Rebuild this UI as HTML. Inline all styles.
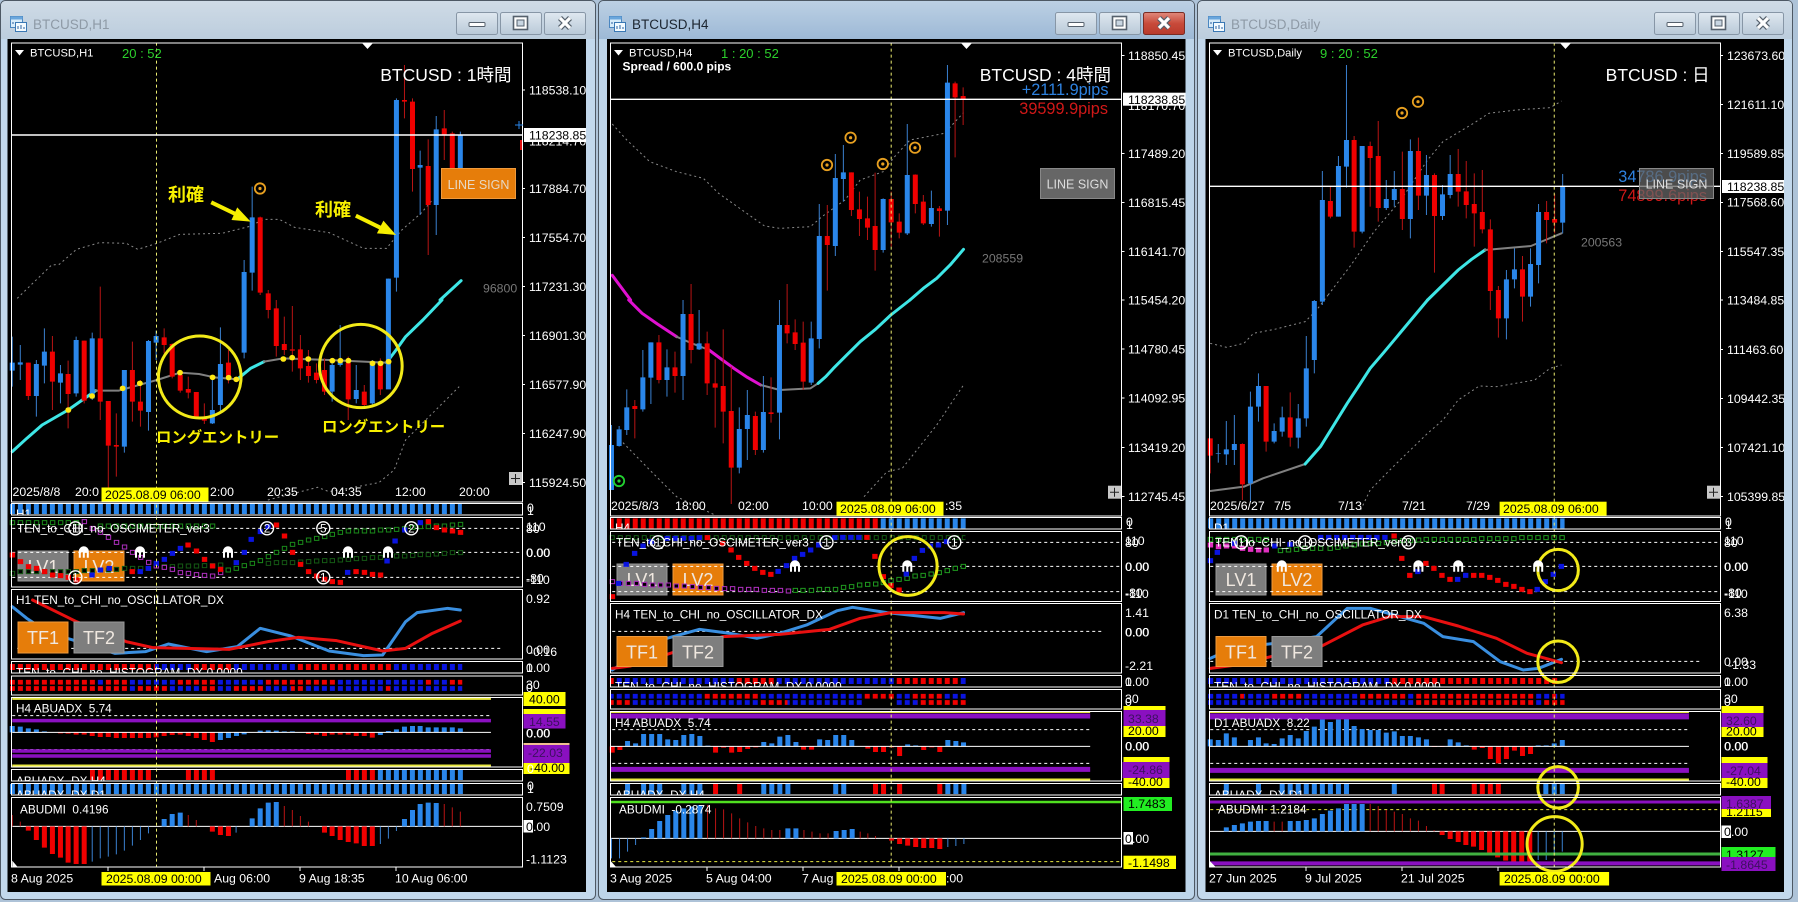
<!DOCTYPE html>
<html><head><meta charset="utf-8"><title>BTCUSD</title>
<style>
html,body{margin:0;padding:0;background:#aec3d8;width:1798px;height:902px;overflow:hidden}
svg{display:block}
text{font-family:"Liberation Sans","Noto Sans CJK JP",sans-serif;font-size:12.3px;fill:#fff}
.z *{vector-effect:non-scaling-stroke;fill:none}
.z .rw{stroke:#b81414;stroke-width:1}
.z .rb{stroke:#f00000;stroke-width:5}
.z .bw{stroke:#3a80d0;stroke-width:1}
.z .bb{stroke:#2a86ea;stroke-width:5}
.z .gap{stroke:#000;stroke-dasharray:3 5}
.z .dw{stroke:#fff;stroke-width:1;stroke-dasharray:3 3}
.z .sw{stroke:#fff;stroke-width:1}
.z .dy{stroke:#eded70;stroke-width:1;stroke-dasharray:3 3}
.z .band{stroke:#8a8a8a;stroke-width:1;stroke-dasharray:2 3}
.z .ma{stroke-width:3;stroke-linejoin:round;stroke-linecap:round}
.z .gm{stroke:#808080;stroke-width:2;stroke-linejoin:round;stroke-linecap:round}
.z .circ{stroke:#f2ea18;stroke-width:3}
.z .pd{stroke-width:5;stroke-linecap:square}
.z .hi{stroke:#000;stroke-width:3;stroke-linecap:square}
.z .row{stroke-dasharray:5 3;stroke-width:5}
.z .rowi{stroke:#000;stroke-dasharray:3 5;stroke-dashoffset:-1;stroke-width:3}
.z .a{stroke:#f6ee00;stroke-width:4}
.z .l{stroke-width:3;stroke-linejoin:round;stroke-linecap:round}
.s{font-size:11.8px}
.big{font-size:17.5px;text-anchor:end}
.y{font-weight:bold;fill:#f8f000}
.k{fill:#000}
.p{fill:#3d1060}
.g{fill:#777}
.btn{font-size:18px;text-anchor:middle;fill:#f0e8e0}
.ls{font-size:12.5px;text-anchor:middle;fill:#e6d8c4}
.pip{font-size:16.3px;text-anchor:end}
</style></head><body>
<svg width="1798" height="902" viewBox="0 0 1798 902" xmlns="http://www.w3.org/2000/svg">
<defs>
<linearGradient id="gi" x1="0" y1="0" x2="0" y2="1"><stop offset="0" stop-color="#cfdbe6"/><stop offset="1" stop-color="#bccddd"/></linearGradient>
<linearGradient id="ga" x1="0" y1="0" x2="0" y2="1"><stop offset="0" stop-color="#bcd0e4"/><stop offset="1" stop-color="#9db9d6"/></linearGradient>
<linearGradient id="gb" x1="0" y1="0" x2="0" y2="1"><stop offset="0" stop-color="#dfe8f0"/><stop offset="1" stop-color="#b9c9d8"/></linearGradient>
<linearGradient id="gr" x1="0" y1="0" x2="0" y2="1"><stop offset="0" stop-color="#e0897c"/><stop offset=".5" stop-color="#c84a3a"/><stop offset="1" stop-color="#b83a2c"/></linearGradient>
<g id="ico"><rect x="10.5" y="16.5" width="12" height="11" fill="#d8ecfa" stroke="#4a86c0"/><rect x="10.5" y="16.5" width="12" height="3" fill="#6aa6dc"/><rect x="15.5" y="22.5" width="11" height="9" fill="#f4fbff" stroke="#3a78b4"/><path d="M18 29v-3M21 29v-4M24 29v-2M13 24v-2" stroke="#2a60a0" fill="none"/></g>
<g id="xg"><path d="M-5 -5L5 5M5 -5L-5 5" stroke="#55606c" stroke-width="5.5" fill="none"/><path d="M-5 -5L5 5M5 -5L-5 5" stroke="#fff" stroke-width="3.2" fill="none"/></g>
<g id="ctl">
<rect x="456.5" y="12.5" width="41" height="22" rx="2" fill="url(#gb)" stroke="#8796a6"/>
<rect x="500.5" y="12.5" width="41" height="22" rx="2" fill="url(#gb)" stroke="#8796a6"/>
<rect x="544.5" y="12.5" width="41" height="22" rx="2" fill="url(#gb)" stroke="#8796a6"/>
<rect x="469" y="22.5" width="16" height="4" rx="1" fill="#fff" stroke="#55606c"/>
<rect x="513.5" y="16.5" width="14" height="13" fill="#fff" stroke="#55606c" stroke-width="1.6"/>
<rect x="517" y="20" width="7" height="6" fill="#c9d6e2" stroke="#55606c"/>
<use href="#xg" x="565" y="23"/>
</g>
<g id="u"><path d="M-5 5.5V-1A5 5 0 0 1 5 -1V5.5H3V0H1V5.5H-1V0H-3V5.5Z" fill="#fff"/></g>
<g id="o"><circle r="5.2" fill="none" stroke="#e8a020" stroke-width="1.8"/><circle r="1.6" fill="#e8a020"/></g>
<g id="og"><circle r="5.2" fill="none" stroke="#22d030" stroke-width="1.8"/><circle r="1.6" fill="#22d030"/></g>
<g id="n"><circle r="6.5" fill="none" stroke="#fff" stroke-width="1.4"/></g>
</defs>

<!-- WINDOW 1 -->
<g>
<rect x=".5" y=".5" width="595" height="899" rx="5" fill="#c2d8ec" stroke="#4d5864"/>
<path d="M1 6Q1 1 6 1H590Q595 1 595 6V39H1Z" fill="url(#gi)"/>
<use href="#ico"/>
<text x="33" y="29" style="font-size:13.5px;fill:#8e9aa6">BTCUSD,H1</text>
<use href="#ctl"/>
<rect x="7.5" y="39" width="578.5" height="853" fill="#000"/>
<svg x="8" y="39" width="578" height="853" viewBox="8 39 578 853">
<rect x="18" y="551" width="50" height="30" fill="#7e7e7e" stroke="#999"/><text class="btn" x="43" y="573">LV1</text>
<rect x="74" y="551" width="50" height="30" fill="#e67d0a" stroke="#f09a3c"/><text class="btn" x="99" y="573">LV2</text>
<g class="z" transform="scale(.38265 .33333)">
<path class="band" d="M45 895L135 795L155 793L200 748L260 728L330 730L360 748L410 730L470 703L580 700L650 680L690 658L730 658L770 682L860 698L950 745L1010 745L1050 690L1100 640L1130 600"/>
<path class="ma" style="stroke:#3ee6e6" d="M1150 900L1205 842"/>
<path class="bw" d="M1203 395V525M1140 348V705M1098 452V645M1036 295V875M659 560V872M638 780V900M1015 836V900"/>
<path class="bb" d="M1203 405V520M1140 388V615M1098 495V503M1036 300V833M659 652V818M638 816V900M1015 836V900"/>
<path class="rw" d="M1182 395V530M1161 330V480M1119 418V765M1078 295V575M1057 195V355M680 650V885M701 870V900M262 860V900"/>
<path class="rb" d="M1182 400V520M1161 385V405M1119 498V615M1078 305V507M1057 300V305M680 652V878M701 880V900"/>
<path class="a" d="M552 607L630 650M930 647L1010 692"/>
<path style="fill:#f6ee00;stroke:none" d="M655 665L605 660L620 622ZM1035 705L985 700L1002 662Z"/>
<g transform="translate(0,900)">
<path class="band" d="M700 600L830 562L860 575L990 548L1030 510L1060 420L1200 260"/>
<path class="ma" style="stroke:#3ee6e6" d="M32 455L70 415L110 375L178 330L215 300L250 272M620 238L655 205L690 185M1010 188L1035 150L1060 110L1105 60L1155 0"/>
<path class="gm" d="M250 272L310 272L410 240L470 218L520 222L560 232L620 238M690 185L740 175L860 180L1010 188"/>
<path class="bw" d="M1015 0V170M973 180V315M931 195V310M889 75V200M868 175V305M638 0V175M576 82V335M555 225V372M408 92V180M388 120V392M325 210V458M241 98V300M199 110V290M158 195V310M116 85V250M95 180V350M53 135V240M32 110V260"/>
<path class="rw" d="M994 175V285M952 255V325M910 170V360M848 175V285M827 190V250M806 150V248M785 105V240M764 18V215M743 50V165M722 0V170M701 0V55M597 150V250M534 310V372M513 276V350M492 230V295M471 210V278M450 130V235M429 85V160M367 240V380M346 125V365M304 340V530M283 303V570M262 0V360M220 122V310M178 182V385M137 108V330M74 188V300"/>
<path class="bb" d="M1015 0V268M973 192V310M931 270V297M889 178V195M868 195V275M638 0V158M576 192V315M555 330V370M408 108V128M388 123V336M325 210V440M241 115V295M199 120V280M158 220V248M116 155V197M95 192V288M53 187V194M32 188V212"/>
<path class="rb" d="M994 192V268M952 275V315M910 188V298M848 210V275M827 218V240M806 198V228M785 148V205M764 148V152M743 132V150M722 25V138M701 0V30M597 188V230M534 350V362M513 276V350M492 267V278M471 225V272M450 132V230M429 112V135M367 305V332M346 210V305M304 435V440M283 303V437M262 115V305M220 122V302M178 222V282M137 155V245M74 188V288"/>
<path style="stroke:#ffe814;stroke-width:5.5;stroke-linecap:round" d="M178 330h1M240 288h1M320 265h1M365 250h1M470 218h1M555 232h1M597 233h1M617 238h1M740 177h1M763 173h1M805 177h1M868 182h1M889 182h1M910 182h1M973 190h1M994 190h1M1015 185h1"/>
<ellipse class="circ" cx="522" cy="231" rx="108" ry="123"/>
<ellipse class="circ" cx="943" cy="198" rx="108" ry="125"/>
<!-- pane 2 -->
<path class="bb" style="stroke-width:10" d="M26 627H1207"/>
<path class="gap" style="stroke-width:12" d="M18 627H1300"/>
<!-- pane 3 -->
<path class="dw" d="M32 685H1365M32 757H1365M32 832H1365"/>
<path class="pd" style="stroke:#1a8a1a" d="M32 668h1M53 668h1M74 668h1M95 668h1M116 668h1M137 668h1M158 668h1M178 668h1M199 668h1M262 678h1M283 678h1M304 678h1M325 678h1M346 678h1M367 678h1M388 678h1M408 678h1M429 678h1M450 678h1M471 678h1M492 678h1M513 678h1M534 678h1M555 678h1M596 810h1M617 805h1M638 797h1M659 790h1M680 782h1M701 770h1M722 757h1M743 745h1M764 733h1M785 727h1M806 720h1M827 715h1M848 710h1M868 703h1M889 697h1M910 693h1M931 693h1M952 693h1M973 693h1M994 690h1M1015 690h1M1036 688h1M1057 686h1M1078 682h1M1098 680h1M1119 680h1M1140 678h1M1161 678h1M1182 675h1M1203 673h1"/>
<path class="hi" d="M32 668h1M53 668h1M74 668h1M95 668h1M116 668h1M137 668h1M158 668h1M178 668h1M199 668h1M262 678h1M283 678h1M304 678h1M325 678h1M346 678h1M367 678h1M388 678h1M408 678h1M429 678h1M450 678h1M471 678h1M492 678h1M513 678h1M534 678h1M555 678h1M596 810h1M617 805h1M638 797h1M659 790h1M680 782h1M701 770h1M722 757h1M743 745h1M764 733h1M785 727h1M806 720h1M827 715h1M848 710h1M868 703h1M889 697h1M910 693h1M931 693h1M952 693h1M973 693h1M994 690h1M1015 690h1M1036 688h1M1057 686h1M1078 682h1M1098 680h1M1119 680h1M1140 678h1M1161 678h1M1182 675h1M1203 673h1"/>
<path class="pd" style="stroke:#145a14" d="M32 820h1M53 815h1M74 815h1M95 815h1M116 815h1M137 815h1M158 815h1M178 815h1M199 815h1M220 812h1M241 812h1M262 810h1M283 810h1M304 808h1M325 805h1M346 805h1M367 805h1M388 805h1M429 800h1M450 800h1M471 798h1M492 798h1M513 798h1M534 797h1M555 797h1M576 795h1M701 790h1M722 788h1M743 788h1M764 788h1M785 786h1M806 785h1M827 783h1M848 782h1M868 782h1M889 780h1M910 778h1M931 776h1M952 775h1M973 773h1M994 772h1M1036 768h1M1057 768h1M1078 766h1M1098 764h1M1119 764h1M1140 762h1M1161 760h1M1182 758h1M1203 758h1"/>
<path class="hi" d="M32 820h1M53 815h1M74 815h1M95 815h1M116 815h1M137 815h1M158 815h1M178 815h1M199 815h1M220 812h1M241 812h1M262 810h1M283 810h1M304 808h1M325 805h1M346 805h1M367 805h1M388 805h1M429 800h1M450 800h1M471 798h1M492 798h1M513 798h1M534 797h1M555 797h1M576 795h1M701 790h1M722 788h1M743 788h1M764 788h1M785 786h1M806 785h1M827 783h1M848 782h1M868 782h1M889 780h1M910 778h1M931 776h1M952 775h1M973 773h1M994 772h1M1036 768h1M1057 768h1M1078 766h1M1098 764h1M1119 764h1M1140 762h1M1161 760h1M1182 758h1M1203 758h1"/>
<path class="pd" style="stroke:#b030c0" d="M220 665h1M241 685h1M262 697h1M283 712h1M304 727h1M325 741h1M346 757h1M367 772h1M388 787h1M408 798h1M429 802h1M450 808h1M471 818h1M492 820h1M513 824h1M534 826h1M555 828h1M576 818h1"/>
<path class="hi" d="M220 665h1M241 685h1M262 697h1M283 712h1M304 727h1M325 741h1M346 757h1M367 772h1M388 787h1M408 798h1M429 802h1M450 808h1M471 818h1M492 820h1M513 824h1M534 826h1M555 828h1M576 818h1"/>
<path class="pd" style="stroke:#f00000" d="M32 765h1M53 785h1M74 800h1M95 805h1M116 815h1M137 825h1M158 827h1M178 832h1M200 840h1M345 815h1M491 735h1M513 753h1M534 778h1M555 798h1M576 808h1M722 675h1M743 708h1M764 757h1M785 793h1M806 815h1M827 828h1M848 838h1M868 845h1M889 847h1M930 815h1M952 817h1M973 823h1M994 825h1M1119 665h1M1140 683h1M1161 690h1M1182 693h1M1203 697h1"/>
<path class="pd" style="stroke:#0a14e0" d="M240 825h1M262 810h1M285 805h1M366 815h1M387 805h1M408 790h1M429 778h1M450 760h1M471 745h1M617 788h1M638 757h1M656 718h1M680 695h1M700 680h1M908 817h1M1011 783h1M1032 723h1M1057 690h1M1098 668h1"/>
</g>
<g transform="translate(0,1800)">
<!-- pane 4 -->
<path class="dw" d="M45 145H1315"/>
<path class="l" style="stroke:#3a8fe0" d="M32 20L70 55L130 100L190 120L300 160L380 155L440 132L540 155L620 140L680 85L760 108L860 153L950 167L1000 165L1060 65L1090 38L1170 25L1203 30"/>
<path class="l" style="stroke:#e81010" d="M85 0L200 65L330 125L400 143L600 148L700 125L780 112L880 122L1000 153L1060 145L1130 100L1203 63"/>
<!-- pane 5 -->
<path style="stroke:#f00000;stroke-width:6" d="M26 201H405M505 201H608M775 201H1023"/>
<path style="stroke:#0a14e0;stroke-width:6" d="M405 201H505M608 201H775M1023 201H1208"/>
<path class="gap" style="stroke-width:8" d="M18 201H1300"/>
<!-- pane 6 -->
<path style="stroke:#f00000;stroke-width:5" d="M26 247H250M270 247H335M460 247H565M690 247H880M1110 247H1128M1170 247H1208M26 265H335M355 265H440M525 265H565M605 265H690M760 265H800M1000 265H1020"/>
<path style="stroke:#0a14e0;stroke-width:5" d="M250 247H270M335 247H460M565 247H690M880 247H1110M1128 247H1170M335 265H355M440 265H525M565 265H605M690 265H760M800 265H1000M1020 265H1208"/>
<path class="gap" style="stroke-width:22" d="M18 256H1300"/>
<path style="stroke:#000;stroke-width:1.5" d="M26 256H1208"/>
<!-- pane 7 -->
<path style="stroke:#e8e840;stroke-width:3" d="M32 295H1283M32 498H1283"/>
<path class="dw" d="M32 347H1283M32 449H1283"/>
<path style="stroke:#8a10c0;stroke-width:3.5" d="M32 362H1283M32 453H1283M32 468H1283"/>
<path class="bb" d="M32 397V378M53 397V380M74 397V385M95 397V388M116 397V394M576 397V420M597 397V414M618 397V408M638 397V403M680 397V392M701 397V391M722 397V392M743 397V394M764 397V394M994 397V405M1015 397V393M1036 397V388M1057 397V380M1078 397V378M1098 397V378M1119 397V382M1140 397V382M1161 397V382M1182 397V382M1203 397V385"/>
<path class="rb" d="M158 397V400M178 397V401M199 397V404M220 397V404M241 397V408M262 397V411M283 397V411M304 397V414M325 397V414M346 397V414M367 397V414M388 397V414M408 397V412M429 397V408M450 397V405M471 397V404M492 397V408M513 397V414M534 397V420M555 397V426M806 397V402M827 397V404M848 397V408M868 397V404M889 397V404M910 397V404M931 397V408M952 397V408M973 397V413"/>
<path class="sw" d="M32 397H1283"/>
<!-- pane 8 9 -->
<path style="stroke:#f00000;stroke-width:10" d="M235 525H396M485 525H562M904 525H985"/>
<path style="stroke:#2a86ea;stroke-width:10" d="M985 525H1210M26 567H1210"/>
<path class="gap" style="stroke-width:12" d="M18 525H1300M18 567H1300"/>
<!-- pane 10 -->
<path class="sw" d="M32 679H1365"/>
<path class="rw" d="M32 679V645M53 679V665M492 679V645M513 679V660M743 679V618M764 679V630M785 679V648M806 679V665M1161 679V612M1182 679V622M1203 679V635"/>
<path class="bw" d="M241 679V785M262 679V775M283 679V770M304 679V763M325 679V752M346 679V737M367 679V720M388 679V700M617 679V698M994 679V732M1015 679V716M1036 679V693"/>
<path class="rb" d="M74 679V692M95 679V720M116 679V743M137 679V762M158 679V773M178 679V788M199 679V792M220 679V792M555 679V695M576 679V705M597 679V708M848 679V698M868 679V708M889 679V720M910 679V726M931 679V730M952 679V738M973 679V738"/>
<path class="bb" d="M429 679V657M450 679V642M471 679V638M659 679V655M680 679V625M701 679V608M722 679V606M1057 679V657M1078 679V630M1098 679V612M1119 679V608M1140 679V609"/>
<path style="fill:#fff;stroke:none" d="M32 782L47 802H32Z"/>
</g>
<path class="dy" d="M409 128V2602"/>
<path class="sw" d="M30 405H1365" style="stroke-width:1.4"/>
</g>
<rect x="18" y="622" width="50" height="31" fill="#e67d0a" stroke="#f09a3c"/><text class="btn" x="43" y="644">TF1</text>
<rect x="74" y="622" width="50" height="31" fill="#7e7e7e" stroke="#999"/><text class="btn" x="99" y="644">TF2</text>
<g fill="none" stroke="#fff"><rect x="11.5" y="43" width="511" height="459"/><rect x="11.5" y="503.5" width="511" height="11.5"/><rect x="11.5" y="517.5" width="511" height="69.5"/><rect x="11.5" y="589.5" width="511" height="69.5"/><rect x="11.5" y="661.5" width="511" height="11.5"/><rect x="11.5" y="676" width="511" height="19"/><rect x="11.5" y="697.5" width="511" height="69.5"/><rect x="11.5" y="769.5" width="511" height="11.5"/><rect x="11.5" y="783.5" width="511" height="11.5"/><rect x="11.5" y="797.5" width="511" height="69.5"/></g>
<path d="M522 90h3M522 188.5h3M522 237.5h3M522 286.5h3M522 335.5h3M522 384.5h3M522 433.5h3M522 482.5h3M108 867v4M204 867v4M300 867v4M396 867v4" stroke="#fff"/>
<path d="M15 50h9l-4.500 5.500zM362 43h11l-5.500 6z" fill="#fff"/>
<text x="30" y="56.500" style="font-size:11.200px">BTCUSD,H1</text>
<text x="122" y="58" style="font-size:13px;fill:#2cd02c">20 : 52</text>
<text class="big" x="511.500" y="81">BTCUSD : 1時間</text>
<rect x="441.500" y="168.500" width="74" height="30" fill="#e67d0a" stroke="#f09a3c"/><text class="ls" x="478.500" y="189">LINE SIGN</text>
<use href="#o" x="260" y="188.500"/>
<text class="y" x="168" y="201" style="font-size:18px">利確</text>
<text class="y" x="315" y="216" style="font-size:18px">利確</text>
<text class="y" x="156" y="442.500" style="font-size:15.400px">ロングエントリー</text>
<text class="y" x="322" y="432" style="font-size:15.400px">ロングエントリー</text>
<text class="g" x="483" y="292.500">96800</text>
<text x="529" y="94.500">118538.10</text><text x="529" y="193">117884.70</text><text x="529" y="242">117554.70</text><text x="529" y="291">117231.30</text><text x="529" y="340">116901.30</text><text x="529" y="389">116577.90</text><text x="529" y="438">116247.90</text><text x="529" y="487">115924.50</text>
<text x="529" y="145.500">118214.70</text>
<rect x="524" y="128" width="62" height="14" fill="#fff"/><text class="k" x="529" y="139.500">118238.85</text>
<path d="M515 125h8M519 121v8" stroke="#2a86ea" fill="none"/><path d="M521 140v10" stroke="#e01010" stroke-width="2"/>
<rect x="509" y="472" width="13" height="13" fill="#c8c8c8"/><path d="M511 478.500h9M515.500 474v9" stroke="#222" fill="none"/>
<text x="12.500" y="496">2025/8/8</text><text x="75" y="496">20:0</text><text x="210" y="496">2:00</text><text x="267" y="496">20:35</text><text x="331" y="496">04:35</text><text x="395" y="496">12:00</text><text x="459" y="496">20:00</text>
<rect x="101.500" y="487.500" width="107" height="14" fill="#ffff00"/><text class="k" x="105" y="499">2025.08.09 06:00</text>
<svg x="16" y="504" width="100" height="11"><text x="0" y="14" class="s">H1</text></svg>
<text class="s" x="17" y="532.500">TEN_to_CHI_no_OSCIMETER_ver3</text>
<g transform="translate(75.400,528.300)"><use href="#n"/><text y="4" class="s" style="text-anchor:middle">1</text></g>
<g transform="translate(75.400,577.300)"><use href="#n"/><text y="4" class="s" style="text-anchor:middle">1</text></g>
<g transform="translate(267,528.300)"><use href="#n"/><text y="4" class="s" style="text-anchor:middle">2</text></g>
<g transform="translate(323.300,528.300)"><use href="#n"/><text y="4" class="s" style="text-anchor:middle">5</text></g>
<g transform="translate(323.300,577.300)"><use href="#n"/><text y="4" class="s" style="text-anchor:middle">1</text></g>
<g transform="translate(411.300,528.300)"><use href="#n"/><text y="4" class="s" style="text-anchor:middle">2</text></g>
<use href="#u" x="83.800" y="552.300"/><use href="#u" x="140" y="552.300"/><use href="#u" x="228" y="552.300"/><use href="#u" x="348" y="552.300"/><use href="#u" x="388" y="552.300"/>
<text class="s" x="16" y="604">H1 TEN_to_CHI_no_OSCILLATOR_DX</text>
<svg x="16" y="662" width="450" height="11"><text class="s" x="0" y="14.500">TEN_to_CHI_no_HISTOGRAM_DX 0.0000</text></svg>
<text class="s" x="16" y="712.500">H4 ABUADX&#160;&#160;5.74</text>
<svg x="16" y="770" width="200" height="11"><text class="s" x="0" y="15">ABUADX_DX H4</text></svg>
<svg x="16" y="784" width="200" height="11"><text class="s" x="0" y="15">ABUADX_DX D1</text></svg>
<text class="s" x="20" y="813.500">ABUDMI&#160;&#160;0.4196</text>
<text x="527" y="512">0</text><text x="527" y="515">1</text>
<text x="526" y="531">110</text><text x="526" y="533">80</text><text x="526" y="557">0.00</text><text x="526.400" y="557">0.00</text><text x="526" y="582.500">-80</text><text x="526" y="584">-110</text>
<text x="526" y="603">0.92</text><text x="526" y="654">0.00</text><text x="529" y="656">-0.16</text>
<text x="526" y="672">0.00</text><text x="526" y="672">1</text>
<text x="526" y="689">30</text><text x="526" y="692">0</text>
<rect x="523.500" y="692" width="42" height="14" fill="#ffff00"/><text class="k" x="529" y="703.500">40.00</text>
<rect x="523.500" y="709" width="42" height="5" fill="#ffff00"/><rect x="523.500" y="714" width="42" height="14.500" fill="#8a10c0"/><text class="p" x="529" y="726">14.55</text>
<text x="526" y="737.500">0.00</text><text x="526.400" y="737.500">0.00</text>
<rect x="523.500" y="743" width="46" height="2" fill="#f0c090"/><rect x="523.500" y="745" width="46" height="18" fill="#8a10c0"/><text class="p" x="528" y="757">-22.03</text>
<rect x="523.500" y="763" width="46" height="11" fill="#ffff00"/><text class="k" x="530" y="772">-40.00</text>
<text x="527" y="773">0</text><text x="527" y="790">0</text><text x="527" y="793">1</text>
<text x="526" y="811">0.7509</text>
<rect x="523.500" y="820" width="9.500" height="12.500" fill="#fff"/><text class="k" x="526" y="831">0</text><text x="533" y="831">.00</text>
<text x="526" y="863.500">-1.1123</text>
<text x="11" y="882.500">8 Aug 2025</text><text x="214" y="882.500">Aug 06:00</text><text x="299" y="882.500">9 Aug 18:35</text><text x="395" y="882.500">10 Aug 06:00</text>
<rect x="101.500" y="872" width="109" height="13.500" fill="#ffff00"/><text class="k" x="106" y="883">2025.08.09 00:00</text>
</svg>
</g>

<!-- WINDOW 2 -->
<g transform="translate(600,0)">
<rect x="-1.500" y=".5" width="596" height="899" rx="5" fill="#bdd5ea" stroke="#4d5864"/>
<path d="M-1 6Q-1 1 4 1H590Q594 1 594 6V39H-1Z" fill="url(#ga)"/>
<g transform="translate(-1,0)"><use href="#ico"/></g>
<text x="32" y="29" style="font-size:13.5px;fill:#1c2530">BTCUSD,H4</text>
<g transform="translate(-1,0)"><use href="#ctl"/><rect x="544.500" y="12.500" width="41" height="22" rx="2" fill="url(#gr)" stroke="#7a2c24"/><use href="#xg" x="565" y="23"/></g>
<rect x="7" y="39" width="578.500" height="853" fill="#000"/>
<svg x="7" y="39" width="578.500" height="853" viewBox="7 39 578.500 853">
<rect x="17" y="564" width="50" height="31" fill="#7e7e7e" stroke="#999"/><text class="btn" x="42" y="586">LV1</text>
<rect x="73" y="564" width="50" height="31" fill="#e67d0a" stroke="#f09a3c"/><text class="btn" x="98" y="586">LV2</text>
<g class="z" transform="scale(.38265 .33333)">
<path class="band" d="M32 372L70 420L130 485L200 515L270 535L310 580L430 678L470 685L550 680L580 650L640 600L680 540L740 515L770 470L810 420L900 400L950 338"/>
<path class="ma" style="stroke:#e010d0" d="M32 826L80 900"/>
<path class="ma" style="stroke:#3ee6e6" d="M810 900L845 865L880 835L915 795L950 748"/>
<path class="bw" d="M908 195V675M866 572V680M803 372V705M740 595V758M636 435V605M615 462V768M573 612V900"/>
<path class="bb" d="M908 248V632M866 624V672M803 525V700M740 597V750M636 517V537M615 534V738M573 708V900"/>
<path class="rw" d="M949 262V375M928 245V472M887 618V710M845 585V675M824 523V640M782 640V715M761 575V740M719 518V812M699 590V720M678 575V708M657 517V648M594 615V872M489 852V900M238 852V900"/>
<path class="rb" d="M949 288V298M928 250V292M887 625V633M845 605V670M824 524V612M782 665V698M761 597V667M719 678V750M699 655V683M678 628V657M657 517V630M594 708V735"/>
<g transform="translate(0,900)">
<path class="band" d="M60 428L130 510L200 590L300 645M690 590L750 515L790 505L880 375L950 255"/>
<path class="ma" style="stroke:#e010d0" d="M75 0L110 40L150 72L200 110M285 150L320 180L350 205L385 232L420 255"/>
<path class="gm" d="M200 110L240 130L285 150M420 255L470 270L550 265L570 250"/>
<path class="ma" style="stroke:#3ee6e6" d="M570 250L590 230L610 205L645 165L680 125L720 88L760 45L810 0"/>
<path class="bw" d="M573 0V145M552 65V255M469 0V418M427 228V458M385 270V480M364 322V520M259 30V150M217 0V300M175 148V290M133 127V312M112 150V335M70 268V405M50 378V440M30 375V570"/>
<path class="rw" d="M531 65V270M510 58V150M489 0V130M447 232V368M406 335V465M343 200V612M322 88V430M301 178V383M280 95V285M238 0V190M196 155V278M154 105V250M91 300V415"/>
<path class="bb" d="M573 0V117M552 115V248M469 75V338M427 336V450M385 345V387M364 387V503M259 130V148M217 42V228M175 202V240M133 127V233M112 232V328M70 322V390M50 388V438M30 435V570"/>
<path class="rb" d="M531 128V245M510 97V132M489 75V100M447 337V342M406 348V450M343 333V503M322 258V335M301 250V263M280 130V250M238 42V150M196 202V228M154 127V240M91 318V327"/>
<!-- pane 2 -->
<path style="stroke:#f00000;stroke-width:10" d="M26 670H730"/><path style="stroke:#2a86ea;stroke-width:10" d="M730 670H956"/>
<path class="gap" style="stroke-width:12" d="M15 670H1300"/>
<!-- pane 3 -->
<path class="dw" d="M32 727H1363M32 799H1363M32 875H1363"/>
<path class="row" style="stroke:#145a14" d="M25.500 713H955"/><path class="rowi" d="M25.500 713H955"/>
<path class="pd" style="stroke:#b030c0" d="M32 845h1M53 850h1M74 850h1M95 850h1M116 853h1M137 855h1M158 855h1M178 855h1M199 858h1M220 858h1M241 860h1M262 862h1M283 863h1M304 865h1M325 866h1M346 866h1M367 868h1M388 868h1M408 868h1M429 871h1M450 871h1M471 871h1M492 873h1"/>
<path class="hi" d="M32 845h1M53 850h1M74 850h1M95 850h1M116 853h1M137 855h1M158 855h1M178 855h1M199 858h1M220 858h1M241 860h1M262 862h1M283 863h1M304 865h1M325 866h1M346 866h1M367 868h1M388 868h1M408 868h1M429 871h1M450 871h1M471 871h1M492 873h1"/>
<path class="pd" style="stroke:#1f9a1f" d="M510 871h1M530 871h1M552 871h1M573 868h1M594 868h1M615 868h1M636 862h1M657 860h1M678 855h1M699 853h1M720 852h1M740 848h1M760 842h1M781 838h1M802 835h1M823 828h1M844 826h1M865 822h1M886 818h1M907 812h1M928 805h1M949 799h1"/>
<path class="pd" style="stroke:#f00000" d="M280 713h1M320 730h1M342 750h1M362 772h1M383 790h1M404 805h1M425 817h1M446 823h1M697 712h1M718 769h1M740 830h1M760 857h1M781 870h1M32 890h1"/>
<path class="hi" d="M510 871h1M530 871h1M552 871h1M573 868h1M594 868h1M615 868h1M636 862h1M657 860h1M678 855h1M699 853h1M720 852h1M740 848h1M760 842h1M781 838h1M802 835h1M823 828h1M844 826h1M865 822h1M886 818h1M907 812h1M928 805h1M949 799h1"/>
<path class="pd" style="stroke:#0a14e0" d="M48 850h1M68 793h1M90 760h1M112 738h1M133 725h1M175 715h1M196 715h1M217 715h1M238 715h1M259 713h1M465 814h1M487 797h1M508 775h1M529 763h1M550 750h1M571 735h1M613 713h1M634 712h1M655 712h1M676 712h1M800 822h1M821 775h1M842 751h1M863 738h1M884 735h1M905 725h1"/>
<ellipse class="circ" cx="805" cy="798" rx="76" ry="88"/>
</g>
<g transform="translate(0,1800)">
<path class="dw" d="M32 94H1310"/>
<path class="l" style="stroke:#3a8fe0" d="M32 210L100 160L175 115L260 88L340 100L410 115L470 100L540 75L620 32L660 22L750 38L890 55L950 38"/>
<path class="l" style="stroke:#e81010" d="M32 205L80 198L320 110L470 103L600 88L680 55L760 38L900 38L950 42"/>
<path style="stroke:#0a14e0;stroke-width:6" d="M38 243H355M455 243H772M938 243H956"/>
<path style="stroke:#f00000;stroke-width:6" d="M26 243H38M355 243H455M772 243H938"/>
<path class="gap" style="stroke-width:8" d="M15 243H1300"/>
<path style="stroke:#0a14e0;stroke-width:5" d="M26 289H270M415 289H690M770 289H812M895 289H956M80 307H415M490 307H690M770 307H830"/>
<path style="stroke:#f00000;stroke-width:5" d="M270 289H415M690 289H770M812 289H895M26 307H80M415 307H490M830 307H956"/>
<path class="gap" style="stroke-width:22" d="M15 298H1300"/>
<path style="stroke:#000;stroke-width:1.5" d="M26 298H956"/>
<path style="stroke:#e8e840;stroke-width:2" d="M27 336H1281"/>
<path style="stroke:#e8e840;stroke-width:3" d="M27 540H1281"/>
<path style="stroke:#8a10c0;stroke-width:5" d="M27 348H1281M27 508H1281"/>
<path class="dw" d="M32 389H1281M32 490H1281"/>
<path class="bb" d="M72 439V423M93 439V430M114 439V402M135 439V402M156 439V402M177 439V418M198 439V420M219 439V405M240 439V402M261 439V408M282 439V437M428 439V426M449 439V430M470 439V410M491 439V405M512 439V426M574 439V418M595 439V420M616 439V405M637 439V405M658 439V420M804 439V433M825 439V436M909 439V420M930 439V423M950 439V427"/>
<path class="rb" d="M32 439V458M52 439V450M302 439V458M323 439V443M344 439V458M365 439V456M386 439V447M407 439V442M532 439V449M553 439V449M700 439V446M720 439V456M741 439V456M762 439V442M783 439V468M846 439V450M867 439V442M888 439V456"/>
<path class="sw" d="M27 439H1281"/>
<path class="bb" d="M72 552V582M114 552V582M135 552V582M156 552V582M219 552V582M240 552V582M261 552V582M428 552V582M449 552V582M470 552V582M491 552V582M616 552V582M637 552V582M909 552V582M930 552V582M951 552V582"/>
<path class="rb" d="M302 552V582M365 552V582M720 552V582M741 552V582M783 552V582M888 552V582"/>
<path style="stroke:#50e020;stroke-width:2.500" d="M27 606H1363"/>
<path class="dy" style="stroke:#e8e840" d="M32 785H1363"/>
<path class="sw" d="M27 715H1363"/>
<path class="bw" d="M30 715V775M51 715V775M72 715V755M93 715V735M909 715V741M930 715V738M951 715V732"/>
<path class="rw" d="M281 715V615M302 715V625M323 715V628M344 715V640M365 715V655M386 715V667M407 715V678M428 715V685M449 715V690M470 715V690M533 715V690M554 715V695M575 715V700M596 715V700M680 715V695M700 715V700M720 715V708"/>
<path class="bb" d="M114 715V712M135 715V687M156 715V663M177 715V645M198 715V632M219 715V625M240 715V620M261 715V615M491 715V685M512 715V685M617 715V693M638 715V690M659 715V687"/>
<path class="rb" d="M762 715V722M783 715V732M804 715V737M825 715V741M846 715V744M867 715V744M888 715V747"/>
<path style="fill:#fff;stroke:none" d="M27 782L43 802H27Z"/>
</g>
<path class="dy" d="M761 128V2602"/>
<path class="sw" d="M27 298H1363" style="stroke-width:1.400"/>
</g>
<rect x="17" y="636.500" width="50" height="30" fill="#e67d0a" stroke="#f09a3c"/><text class="btn" x="42" y="658.500">TF1</text>
<rect x="73" y="636.500" width="50" height="30" fill="#7e7e7e" stroke="#999"/><text class="btn" x="98" y="658.500">TF2</text>
<g fill="none" stroke="#fff"><rect x="10.500" y="43" width="511" height="473"/><rect x="10.500" y="517.500" width="511" height="11.500"/><rect x="10.500" y="531.500" width="511" height="70"/><rect x="10.500" y="603.500" width="511" height="69.500"/><rect x="10.500" y="675.500" width="511" height="11.500"/><rect x="10.500" y="689.500" width="511" height="19.500"/><rect x="10.500" y="711.500" width="511" height="69.500"/><rect x="10.500" y="783.500" width="511" height="11.500"/><rect x="10.500" y="797.500" width="511" height="69.500"/></g>
<path d="M521.500 55.500h3M521.500 153.500h3M521.500 202.500h3M521.500 251.500h3M521.500 300h3M521.500 349h3M521.500 398h3M521.500 447.500h3M521.500 496.500h3M107 867v4M203 867v4M299 867v4" stroke="#fff"/>
<path d="M14 50h9l-4.500 5.500zM361 43h11l-5.500 6z" fill="#fff"/>
<text x="29" y="56.500" style="font-size:11.200px">BTCUSD,H4</text>
<text x="121" y="58" style="font-size:13px;fill:#2cd02c">1 : 20 : 52</text>
<text x="22.500" y="70.500" style="font-size:12px;font-weight:bold">Spread / 600.0 pips</text>
<text class="big" x="511" y="81">BTCUSD : 4時間</text>
<text class="pip" x="508.500" y="95" style="fill:#2e82e0">+2111.9pips</text>
<text class="pip" x="508" y="114" style="fill:#d01818">39599.9pips</text>
<rect x="440.500" y="168.500" width="74" height="30" fill="#666" stroke="#888"/><text class="ls" x="477.500" y="188.500" style="fill:#ddd">LINE SIGN</text>
<use href="#o" x="227" y="165"/><use href="#o" x="250.600" y="137.700"/><use href="#o" x="282.800" y="164"/><use href="#o" x="315" y="147.700"/>
<use href="#og" x="19" y="481"/>
<text class="g" x="382" y="262.500">208559</text>
<text x="528" y="60">118850.45</text><text x="528" y="158">117489.20</text><text x="528" y="207">116815.45</text><text x="528" y="256">116141.70</text><text x="528" y="304.500">115454.20</text><text x="528" y="353.500">114780.45</text><text x="528" y="402.500">114092.95</text><text x="528" y="452">113419.20</text><text x="528" y="501">112745.45</text>
<text x="528" y="110">118170.70</text>
<rect x="523" y="92.700" width="62.500" height="13" fill="#fff"/><text class="k" x="528" y="104">118238.85</text>
<rect x="508" y="485.700" width="13" height="13" fill="#c8c8c8"/><path d="M510 492.200h9M514.500 487.700v9" stroke="#222" fill="none"/>
<text x="11" y="510">2025/8/3</text><text x="75" y="510">18:00</text><text x="138" y="510">02:00</text><text x="202" y="510">10:00</text><text x="345" y="510">:35</text>
<rect x="236.500" y="501.700" width="107" height="14" fill="#ffff00"/><text class="k" x="240" y="513">2025.08.09 06:00</text>
<svg x="15" y="518" width="100" height="11"><text x="0" y="14" class="s">H4</text></svg>
<text class="s" x="16" y="546.500">TEN_to_CHI_no_OSCIMETER_ver3</text>
<g transform="translate(58,542.300)"><use href="#n"/><text y="4" class="s" style="text-anchor:middle">1</text></g>
<g transform="translate(226.500,542.300)"><use href="#n"/><text y="4" class="s" style="text-anchor:middle">1</text></g>
<g transform="translate(354.300,542.300)"><use href="#n"/><text y="4" class="s" style="text-anchor:middle">1</text></g>
<use href="#u" x="195" y="566.300"/><use href="#u" x="307.300" y="566.300"/>
<text class="s" x="15" y="618.500">H4 TEN_to_CHI_no_OSCILLATOR_DX</text>
<svg x="15" y="676" width="450" height="11"><text class="s" x="0" y="14.500">TEN_to_CHI_no_HISTOGRAM_DX 0.0000</text></svg>
<text class="s" x="15" y="727">H4 ABUADX&#160;&#160;5.74</text>
<svg x="15" y="784" width="200" height="11"><text class="s" x="0" y="15">ABUADX_DX H4</text></svg>
<text class="s" x="19" y="813.500">ABUDMI&#160;&#160;-0.2874</text>
<text x="526" y="526">0</text><text x="526" y="529">1</text>
<text x="525" y="545">110</text><text x="525" y="547">80</text><text x="525" y="571">0.00</text><text x="525.400" y="571">0.00</text><text x="525" y="597">-80</text><text x="525" y="598">-110</text>
<text x="525" y="617">1.41</text><text x="525" y="636.500">0.00</text><text x="525.400" y="636.500">0.00</text><text x="525" y="670">-2.21</text>
<text x="525" y="686">0.00</text><text x="525" y="686">1</text>
<text x="525" y="703">30</text><text x="525" y="706">0</text>
<rect x="523.500" y="706" width="42" height="4" fill="#ffff00"/><rect x="523.500" y="710" width="42" height="16" fill="#8a10c0"/><text class="p" x="528" y="723">33.38</text>
<rect x="523.500" y="726" width="42" height="11" fill="#ffff00"/><text class="k" x="528" y="735">20.00</text>
<text x="525" y="750.500">0.00</text><text x="525.400" y="750.500">0.00</text>
<rect x="523.500" y="757" width="46" height="5" fill="#ffff00"/><rect x="522.500" y="762" width="47" height="16" fill="#8a10c0"/><text class="p" x="528" y="774">-24.86</text>
<rect x="523.500" y="778" width="46" height="10" fill="#ffff00"/><text class="k" x="528" y="786">-40.00</text>
<rect x="523.500" y="797" width="48.500" height="14" fill="#22ee22"/><text class="k" x="528" y="808">1.7483</text>
<rect x="523.500" y="832" width="9.500" height="12.500" fill="#fff"/><text class="k" x="525" y="843">0</text><text x="532" y="843">.00</text>
<rect x="523.500" y="855.700" width="52.500" height="13.300" fill="#ffff00"/><text class="k" x="528" y="867">-1.1498</text>
<text x="10" y="882.500">3 Aug 2025</text><text x="106" y="882.500">5 Aug 04:00</text><text x="202" y="882.500">7 Aug</text><text x="346" y="882.500">:00</text>
<rect x="236.500" y="872" width="109.500" height="13.500" fill="#ffff00"/><text class="k" x="241" y="883">2025.08.09 00:00</text>
</svg>
</g>

<!-- WINDOW 3 -->
<g transform="translate(1198,0)">
<rect x="-.5" y=".5" width="595" height="899" rx="5" fill="#c2d8ec" stroke="#4d5864"/>
<path d="M0 6Q0 1 5 1H590Q594 1 594 6V39H0Z" fill="url(#gi)"/>
<use href="#ico"/>
<text x="33" y="29" style="font-size:13.5px;fill:#8e9aa6">BTCUSD,Daily</text>
<use href="#ctl"/>
<rect x="7.500" y="39" width="578.500" height="853" fill="#000"/>
<svg x="8" y="39" width="578" height="853" viewBox="8 39 578 853">
<rect x="18" y="564" width="50" height="31" fill="#7e7e7e" stroke="#999"/><text class="btn" x="43" y="586">LV1</text>
<rect x="74" y="564" width="50" height="31" fill="#e67d0a" stroke="#f09a3c"/><text class="btn" x="99" y="586">LV2</text>
<g class="z" transform="scale(.38265 .33333)">
<path class="band" d="M340 885L400 795L460 695L530 600L600 480L640 425L720 370L760 340L830 330L920 323L950 303"/>
<path class="ma" style="stroke:#3ee6e6" d="M600 900L640 855L680 810L715 778L750 750"/>
<path class="gm" d="M750 750L870 738L950 700"/>
<path class="bw" d="M953 522V700M890 612V850M869 745V900M827 745V865M806 810V900M659 465V595M639 555V660M597 465V645M555 418V715M513 513V620M492 540V630M429 438V700M388 195V563M367 468V650M325 513V900"/>
<path class="rw" d="M932 582V700M911 603V730M848 768V900M785 858V900M764 658V900M743 510V700M722 520V740M701 483V655M680 447V620M618 520V818M576 413V630M534 455V690M471 363V665M450 425V620M408 408V743M346 560V655"/>
<path class="bb" d="M953 558V668M890 636V795M869 792V890M827 808V838M806 838V900M659 522V585M639 583V648M597 525V587M555 453V657M513 567V600M492 597V624M429 438V695M388 420V500M367 498V650M325 600V900"/>
<path class="rb" d="M932 657V668M911 636V660M848 808V890M785 870V900M764 688V873M743 636V688M722 612V640M701 574V615M680 522V575M618 525V648M576 453V587M534 567V657M471 468V624M450 438V474M408 420V695M346 603V650"/>
<g transform="translate(0,900)">
<path class="band" d="M32 130L75 142L120 130L145 100L200 88L280 65L310 30L340 -15M425 630L450 570L510 500L600 400L640 360L680 300L735 258L780 260L880 240L920 205L950 195"/>
<path class="gm" d="M32 573L120 560L170 535L280 492"/>
<path class="ma" style="stroke:#3ee6e6" d="M280 492L320 440L355 375L390 310L420 258L450 205L485 158L520 110L600 0"/>
<path class="bw" d="M869 0V20M806 0V118M325 0V15M304 0V220M283 108V380M262 312V445M220 320V410M199 370V430M158 220V365M137 275V605M95 345V495M74 363V495M53 432V488"/>
<path class="rw" d="M848 0V65M785 0V113M764 0V30M241 277V440M178 258V455M116 430V600M32 415V520"/>
<path class="bb" d="M806 0V55M325 0V5M304 3V180M283 205V355M262 355V413M220 352V395M199 393V425M158 258V320M137 320V550M95 432V450M74 448V463M53 460V462"/>
<path class="rb" d="M785 0V55M241 352V413M178 258V425M116 432V553M32 415V467"/>
<path style="stroke:#2a86ea;stroke-width:10" d="M26 670H958"/>
<path class="gap" style="stroke-width:12" d="M18.800 670H1300"/>
<path class="dw" d="M32 727H1365M32 799H1365M32 875H1365"/>
<path class="pd" style="stroke:#1f9a1f" d="M215 752h1M236 750h1M257 748h1M278 745h1M299 745h1M320 745h1M345 745h1M365 742h1M386 738h1M408 735h1M429 732h1M450 730h1M471 730h1M492 728h1M513 725h1M534 722h1M555 722h1M576 720h1M596 718h1M617 718h1M638 718h1M659 718h1M680 718h1M700 718h1M720 718h1M741 716h1M762 716h1M783 716h1M804 716h1M825 716h1M846 713h1M867 713h1M888 713h1M909 713h1M930 713h1M951 713h1M32 718h1M53 718h1M74 718h1M95 718h1M116 718h1M137 718h1M158 718h1M178 718h1"/>
<path class="hi" d="M215 752h1M236 750h1M257 748h1M278 745h1M299 745h1M320 745h1M345 745h1M365 742h1M386 738h1M408 735h1M429 732h1M450 730h1M471 730h1M492 728h1M513 725h1M534 722h1M555 722h1M576 720h1M596 718h1M617 718h1M638 718h1M659 718h1M680 718h1M700 718h1M720 718h1M741 716h1M762 716h1M783 716h1M804 716h1M825 716h1M846 713h1M867 713h1M888 713h1M909 713h1M930 713h1M951 713h1M32 718h1M53 718h1M74 718h1M95 718h1M116 718h1M137 718h1M158 718h1M178 718h1"/>
<path class="pd" style="stroke:#e030c0" d="M32 735h1M53 740h1M74 738h1M95 738h1M116 745h1M137 748h1M158 750h1M178 750h1"/>
<path class="pd" style="stroke:#f00000" d="M512 708h1M532 775h1M553 826h1M595 790h1M616 805h1M637 826h1M658 838h1M720 826h1M741 826h1M762 832h1M783 841h1M804 853h1M825 859h1M846 868h1M867 875h1"/>
<path class="pd" style="stroke:#0a14e0" d="M32 782h1M50 757h1M95 730h1M200 738h1M240 733h1M320 712h1M341 712h1M362 712h1M383 712h1M404 712h1M425 712h1M446 712h1M467 712h1M488 712h1M574 815h1M678 838h1M699 826h1M886 868h1M907 845h1M928 823h1M949 799h1"/>
<ellipse class="circ" cx="941" cy="810" rx="53" ry="62"/>
</g>
<g transform="translate(0,1800)">
<path class="dw" d="M32 184H1312"/>
<path class="l" style="stroke:#3a8fe0" d="M32 175L90 145L200 130L310 110L390 25L450 25L590 70L640 110L720 125L790 185L850 210L890 205L950 178"/>
<path class="l" style="stroke:#e81010" d="M32 205L100 195L190 170L320 140L430 75L500 50L590 50L680 78L780 115L860 160L950 188"/>
<path style="stroke:#0a14e0;stroke-width:6" d="M26 243H500"/><path style="stroke:#f00000;stroke-width:6" d="M500 243H940"/>
<path class="gap" style="stroke-width:8" d="M18.800 243H1300"/>
<path style="stroke:#0a14e0;stroke-width:5" d="M26 289H105M120 289H190M270 289H420M545 289H570M880 289H925M935 289H958M26 307H565M880 307H900"/>
<path style="stroke:#f00000;stroke-width:5" d="M105 289H120M190 289H270M420 289H545M570 289H880M925 289H935M565 307H880M900 307H958"/>
<path class="gap" style="stroke-width:22" d="M18.800 298H1300"/>
<path style="stroke:#000;stroke-width:1.500" d="M26 298H958"/>
<path style="stroke:#e8e840;stroke-width:2" d="M30 336H1283"/><path style="stroke:#e8e840;stroke-width:3" d="M30 540H1283"/>
<path class="dw" d="M32 389H1283M32 490H1283"/>
<path class="bb" d="M32 439V418M53 439V420M74 439V400M95 439V412M137 439V420M158 439V412M178 439V430M199 439V432M220 439V415M241 439V405M262 439V415M283 439V393M304 439V380M325 439V358M346 439V366M367 439V358M388 439V352M408 439V378M429 439V387M450 439V390M471 439V390M492 439V398M513 439V394M534 439V408M555 439V408M576 439V412M597 439V418M659 439V418M680 439V427M701 439V436M889 439V436M910 439V436M931 439V430M952 439V420"/>
<path class="rb" d="M618 439V441M638 439V441M722 439V449M743 439V444M764 439V477M785 439V490M806 439V477M827 439V452M848 439V468M869 439V462"/>
<path class="sw" d="M30 439H1283"/>
<path style="stroke:#8a10c0;stroke-width:6" d="M30 349H1283"/>
<path style="stroke:#8a10c0;stroke-width:5" d="M30 511H1283"/>
<path class="bb" d="M74 552V582M158 552V582M220 552V582M241 552V582M262 552V582M283 552V582M304 552V582M325 552V582M346 552V582M367 552V582M388 552V582M513 552V582M909 552V582M931 552V582M952 552V582"/>
<path class="rb" d="M618 552V582M638 552V582M722 552V582M743 552V582M764 552V582M785 552V582"/>
<path class="sw" d="M30 694H1365"/>
<path class="dy" style="stroke:#e8e840" d="M32 629H1365"/>
<path class="rw" d="M199 694V665M220 694V665M450 694V612M471 694V618M492 694V630M513 694V635M534 694V642M555 694V655M576 694V662M597 694V678M617 694V690"/>
<path class="bw" d="M889 694V780M910 694V780M931 694V765M952 694V755"/>
<path class="bb" d="M74 694V682M95 694V675M116 694V670M137 694V665M158 694V663M178 694V663M241 694V663M262 694V663M283 694V660M304 694V655M325 694V642M346 694V632M367 694V625M388 694V612M408 694V612M429 694V612"/>
<path class="rb" d="M638 694V705M659 694V717M680 694V726M700 694V735M720 694V740M741 694V750M762 694V760M783 694V772M804 694V782M825 694V786M846 694V786M867 694V786"/>
<path style="stroke:#40b040;stroke-width:3" d="M30 762H1365"/>
<path style="stroke:#8a10c0;stroke-width:3" d="M30 606H1365"/>
<path style="stroke:#8a10c0;stroke-width:4" d="M30 790H1365"/>
<path style="fill:#fff;stroke:none" d="M30 782L47 802H30Z"/>
<ellipse class="circ" cx="941" cy="185" rx="53" ry="62"/>
<ellipse class="circ" cx="941" cy="562" rx="53" ry="62"/>
<ellipse class="circ" cx="932" cy="732" rx="72" ry="82"/>
</g>
<path class="dy" d="M931 128V2602"/>
<path class="sw" d="M30 559H1365" style="stroke-width:1.400"/>
</g>
<rect x="18" y="636.500" width="50" height="30" fill="#e67d0a" stroke="#f09a3c"/><text class="btn" x="43" y="658.500">TF1</text>
<rect x="74" y="636.500" width="50" height="30" fill="#7e7e7e" stroke="#999"/><text class="btn" x="99" y="658.500">TF2</text>
<g fill="none" stroke="#fff"><rect x="11.500" y="43" width="511" height="473"/><rect x="11.500" y="517.500" width="511" height="11.500"/><rect x="11.500" y="531.500" width="511" height="70"/><rect x="11.500" y="603.500" width="511" height="69.500"/><rect x="11.500" y="675.500" width="511" height="11.500"/><rect x="11.500" y="689.500" width="511" height="19.500"/><rect x="11.500" y="711.500" width="511" height="69.500"/><rect x="11.500" y="783.500" width="511" height="11.500"/><rect x="11.500" y="797.500" width="511" height="69.500"/></g>
<path d="M522 55.500h3M522 104.500h3M522 153.500h3M522 202.500h3M522 251.500h3M522 300h3M522 349.500h3M522 398.500h3M522 447.500h3M522 496.500h3M108 867v4M204 867v4M300 867v4" stroke="#fff"/>
<path d="M15 50h9l-4.500 5.500zM362 43h11l-5.500 6z" fill="#fff"/>
<text x="30" y="56.500" style="font-size:11.200px">BTCUSD,Daily</text>
<text x="122" y="58" style="font-size:13px;fill:#2cd02c">9 : 20 : 52</text>
<text class="big" x="511.700" y="81">BTCUSD : 日</text>
<use href="#o" x="204" y="113"/><use href="#o" x="220" y="101.700"/>
<text class="pip" x="509" y="182" style="fill:#2e82e0">34786.9pips</text>
<text class="pip" x="509" y="201" style="fill:#d01818">74899.6pips</text>
<rect x="441.500" y="168.500" width="74" height="30" fill="#666" fill-opacity=".75" stroke="#888"/><text class="ls" x="478.500" y="188.500" style="fill:#ddd">LINE SIGN</text>
<text class="g" x="383" y="246.500">200563</text>
<text x="529" y="60">123673.60</text><text x="529" y="109">121611.10</text><text x="529" y="158">119589.85</text><text x="529" y="206.500">117568.60</text><text x="529" y="256">115547.35</text><text x="529" y="304.500">113484.85</text><text x="529" y="354">111463.60</text><text x="529" y="403">109442.35</text><text x="529" y="452">107421.10</text><text x="529" y="501">105399.85</text>
<rect x="524" y="180" width="62" height="13" fill="#fff"/><text class="k" x="529" y="191">118238.85</text>
<rect x="509" y="485.700" width="13" height="13" fill="#c8c8c8"/><path d="M511 492.200h9M515.500 487.700v9" stroke="#222" fill="none"/>
<text x="12" y="510">2025/6/27</text><text x="76" y="510">7/5</text><text x="140" y="510">7/13</text><text x="204" y="510">7/21</text><text x="268" y="510">7/29</text>
<rect x="301.600" y="501.700" width="107" height="14" fill="#ffff00"/><text class="k" x="305" y="513">2025.08.09 06:00</text>
<svg x="16" y="518" width="100" height="11"><text x="0" y="14" class="s">D1</text></svg>
<text class="s" x="17" y="546.500">TEN_to_CHI_no_OSCIMETER_ver3</text>
<g transform="translate(43.200,542.300)"><use href="#n"/><text y="4" class="s" style="text-anchor:middle">1</text></g>
<g transform="translate(107.100,542.300)"><use href="#n"/><text y="4" class="s" style="text-anchor:middle">1</text></g>
<g transform="translate(210.500,542.300)"><use href="#n"/><text y="4" class="s" style="text-anchor:middle">3</text></g>
<use href="#u" x="83.800" y="566.300"/><use href="#u" x="220.400" y="566.300"/><use href="#u" x="260.200" y="566.300"/><use href="#u" x="340.200" y="566.300"/>
<text class="s" x="16" y="618.500">D1 TEN_to_CHI_no_OSCILLATOR_DX</text>
<svg x="16" y="676" width="450" height="11"><text class="s" x="0" y="14.500">TEN_to_CHI_no_HISTOGRAM_DX 0.0000</text></svg>
<text class="s" x="16" y="727">D1 ABUADX&#160;&#160;8.22</text>
<svg x="16" y="784" width="200" height="11"><text class="s" x="0" y="15">ABUADX_DX D1</text></svg>
<text class="s" x="20" y="813.500">ABUDMI&#160;&#160;1.2184</text>
<text x="527" y="526">0</text><text x="527" y="529">1</text>
<text x="526" y="545">110</text><text x="526" y="547">80</text><text x="526" y="571">0.00</text><text x="526.400" y="571">0.00</text><text x="526" y="597">-80</text><text x="526" y="598">-110</text>
<text x="526" y="617">6.38</text><text x="526" y="666">0.00</text><text x="530" y="669">-1.33</text>
<text x="526" y="686">0.00</text><text x="526" y="686">1</text>
<text x="526" y="703">30</text><text x="526" y="706">0</text>
<rect x="523.500" y="706" width="42" height="7" fill="#ffff00"/><rect x="523.500" y="713" width="42" height="14" fill="#8a10c0"/><text class="p" x="528" y="725">32.60</text>
<rect x="523.500" y="727" width="42" height="10" fill="#ffff00"/><text class="k" x="528" y="735.500">20.00</text>
<text x="526" y="750.500">0.00</text><text x="526.400" y="750.500">0.00</text>
<rect x="523.500" y="757" width="46" height="6" fill="#ffff00"/><rect x="523.500" y="763" width="46" height="15" fill="#8a10c0"/><text class="p" x="528" y="775">-27.04</text>
<rect x="523.500" y="778" width="46" height="10" fill="#ffff00"/><text class="k" x="528" y="786">-40.00</text>
<rect x="523.500" y="809" width="49.500" height="8" fill="#ffff00"/><text class="k" x="528" y="816">1.2115</text>
<rect x="523.500" y="796" width="49.500" height="13" fill="#8a10c0"/><text class="p" x="528" y="808">1.6387</text>
<rect x="523.500" y="825.500" width="9.500" height="12.500" fill="#fff"/><text class="k" x="526" y="836">0</text><text x="533" y="836">.00</text>
<rect x="523.500" y="847" width="54" height="10" fill="#22ee22"/><text class="k" x="528" y="859">1.3127</text>
<rect x="523.500" y="857" width="54" height="14" fill="#8a10c0"/><text class="p" x="528" y="869">-1.8645</text>
<text x="11" y="882.500">27 Jun 2025</text><text x="107" y="882.500">9 Jul 2025</text><text x="203" y="882.500">21 Jul 2025</text>
<rect x="301.600" y="872" width="109.500" height="13.500" fill="#ffff00"/><text class="k" x="306" y="883">2025.08.09 00:00</text>
</svg>
</g>
</svg>
</body></html>
